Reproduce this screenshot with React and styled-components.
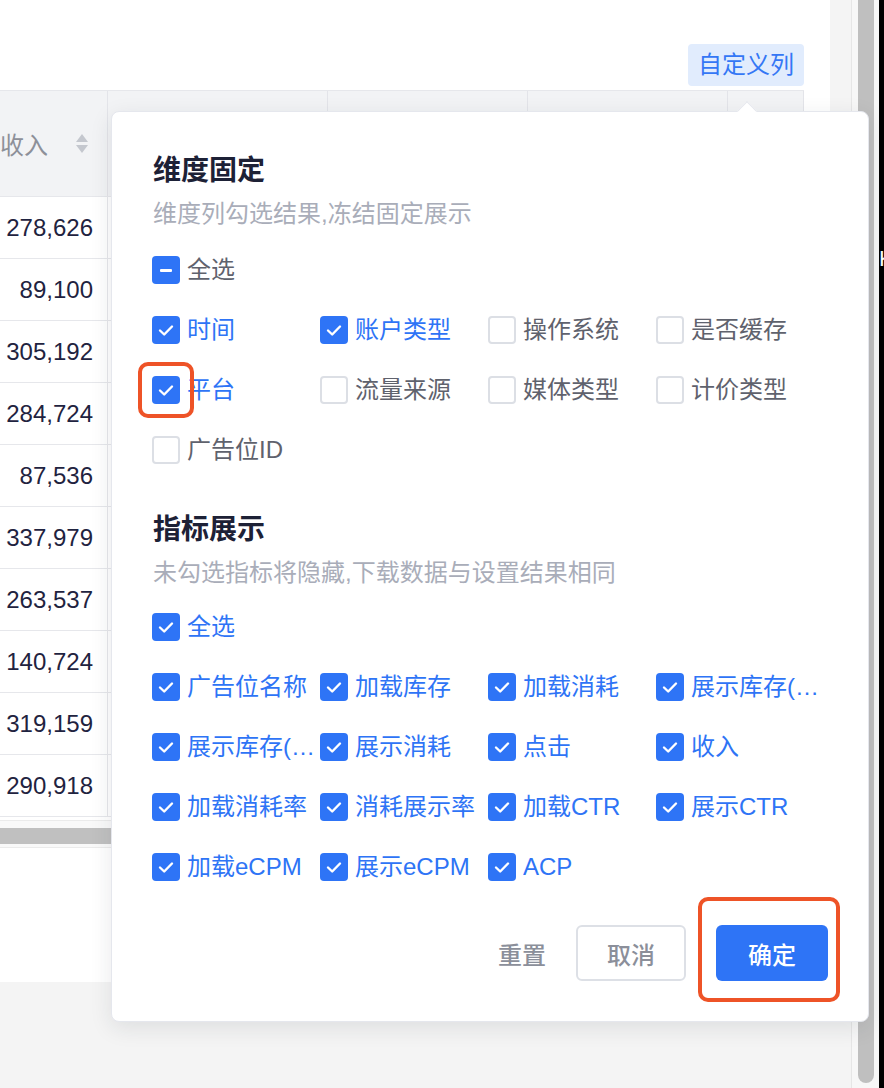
import React from 'react';
import styled, { createGlobalStyle } from 'styled-components';

const FONT = `"Liberation Sans", "Noto Sans CJK SC", sans-serif`;

const Global = createGlobalStyle`
  html, body { margin: 0; padding: 0; background: #f4f4f4; }
  body { font-family: ${FONT}; width: 884px; height: 1088px; overflow: hidden; }
  * { box-sizing: border-box; }
  button { font-family: ${FONT}; }
`;

const Screen = styled.div`
  display: flex;
  width: 884px;
  height: 1088px;
  overflow: hidden;
`;

const Workspace = styled.div`
  position: relative;
  width: 851px;
  flex: none;
  height: 100%;
  background: #f4f4f4;
`;

const Card = styled.div`
  width: 830px;
  height: 982px;
  background: #fff;
  display: flex;
  flex-direction: column;
`;

const Toolbar = styled.div`
  height: 90px;
  display: flex;
  justify-content: flex-end;
  align-items: flex-end;
  padding: 0 26px 4px 0;
`;

const CustomButton = styled.button`
  height: 42px;
  padding: 0 10px;
  border: none;
  border-radius: 4px;
  background: #e1ecfd;
  color: #3477f5;
  font-size: 24px;
  line-height: 42px;
`;

const Table = styled.div`
  width: 804px;
  border-top: 1px solid #e6e7eb;
`;

const COLS = '108px 220px 200px 200px 76px';

const HeaderRow = styled.div`
  display: grid;
  grid-template-columns: ${COLS};
  height: 106px;
  background: #f2f3f5;
  border-bottom: 1px solid #e6e7eb;
`;

const HeadCell = styled.div`
  display: flex;
  align-items: center;
  justify-content: flex-end;
  gap: 27px;
  padding-right: 18px;
  border-right: 1px solid #e3e4e9;
  color: #8d9099;
  font-size: 24px;
  white-space: nowrap;
  overflow: hidden;
`;

const SortIcon = styled.svg`
  width: 14px;
  height: 19px;
  flex: none;
`;

const BodyRow = styled.div`
  display: grid;
  grid-template-columns: ${COLS};
  height: 62px;
  border-bottom: 1px solid #e6e7eb;
`;

const Cell = styled.div`
  display: flex;
  align-items: center;
  justify-content: flex-end;
  padding-right: 14px;
  border-right: 1px solid #e6e7eb;
  color: #1f2340;
  font-size: 24px;
`;

const HScroll = styled.div`
  margin-top: 3px;
  padding: 7px 0 3px;
  border-top: 1px solid #ebebeb;
  border-bottom: 1px solid #ebebeb;
  background: #f9f9f9;
`;

const HThumb = styled.div`
  width: 700px;
  height: 16px;
  background: #c0c0c0;
`;

const ScrollTrack = styled.div`
  width: 28px;
  flex: none;
  height: 100%;
  padding: 0 5px 0 6px;
  border-left: 1px solid #e6e6e6;
  background: #f7f7f7;
`;

const VThumb = styled.div`
  margin-top: -10px;
  height: 1093px;
  border-radius: 8px;
  background: #bfbfbf;
`;

const OffScreen = styled.div`
  width: 5px;
  flex: none;
  height: 100%;
  background: #000;
  color: #fff;
  font-size: 22px;
  padding-top: 246px;
  overflow: hidden;
  white-space: nowrap;
`;

const Popover = styled.div`
  position: absolute;
  left: 111px;
  top: 111px;
  width: 758px;
  padding: 42px 40px 40px 40px;
  background: #fff;
  border: 1px solid #e5e7ed;
  border-radius: 8px;
  box-shadow: 0 6px 22px rgba(30, 35, 50, 0.1);
  z-index: 10;
`;

const Arrow = styled.div`
  position: absolute;
  top: -8px;
  left: 628px;
  width: 14px;
  height: 14px;
  background: #fff;
  border-left: 1px solid #e5e7ed;
  border-top: 1px solid #e5e7ed;
  transform: rotate(45deg);
`;

const SectionTitle = styled.div`
  margin-top: ${(p) => (p.$first ? 0 : 33)}px;
  font-size: 28px;
  line-height: 34px;
  font-weight: 700;
  color: #1d2136;
  padding-left: 1px;
`;

const SectionHint = styled.div`
  margin-top: 8px;
  font-size: 24px;
  line-height: 36px;
  color: #a9adb9;
  padding-left: 1px;
`;

const OptionGrid = styled.div`
  margin-top: ${(p) => p.$gap}px;
  display: grid;
  grid-template-columns: repeat(4, 168px);
  grid-auto-rows: 60px;
`;

const Option = styled.label`
  display: flex;
  align-items: center;
  gap: 7px;
  min-width: 0;
  grid-column: ${(p) => (p.$wide ? '1 / -1' : 'auto')};
`;

const BoxWrap = styled.span`
  position: relative;
  display: inline-flex;
  flex: none;
`;

const Box = styled.span`
  width: 28px;
  height: 28px;
  border-radius: 4px;
  display: inline-flex;
  align-items: center;
  justify-content: center;
  background: ${(p) => (p.$state === 'off' ? '#fff' : '#2e74f6')};
  border: ${(p) => (p.$state === 'off' ? '2px solid #dcdfe5' : 'none')};
`;

const Dash = styled.span`
  width: 12px;
  height: 3px;
  border-radius: 1px;
  background: #fff;
`;

const Label = styled.span`
  flex: 1;
  min-width: 0;
  padding-right: 4px;
  font-size: 24px;
  line-height: 30px;
  white-space: nowrap;
  overflow: hidden;
  text-overflow: ellipsis;
  color: ${(p) => (p.$state === 'on' ? '#2e74f6' : '#5f626d')};
`;

const Mark = styled.span`
  position: absolute;
  top: ${(p) => p.$t}px;
  right: ${(p) => p.$r}px;
  bottom: ${(p) => p.$b}px;
  left: ${(p) => p.$l}px;
  border: 4px solid #ee5327;
  border-radius: 10px;
  pointer-events: none;
  z-index: 3;
`;

const Footer = styled.div`
  margin-top: 28px;
  display: flex;
  justify-content: flex-end;
  align-items: center;
  gap: 30px;
`;

const TextButton = styled.button`
  padding: 0;
  border: none;
  background: transparent;
  color: #8b8f9a;
  font-size: 24px;
  font-weight: 500;
`;

const GhostButton = styled.button`
  width: 110px;
  height: 56px;
  border: 2px solid #dde0e6;
  border-radius: 6px;
  background: #fff;
  color: #8b8f9a;
  font-size: 24px;
  font-weight: 500;
`;

const PrimaryWrap = styled.span`
  position: relative;
  display: inline-flex;
`;

const PrimaryButton = styled.button`
  width: 112px;
  height: 56px;
  border: none;
  border-radius: 6px;
  background: #2e74f6;
  color: #fff;
  font-size: 24px;
  font-weight: 500;
`;

const Check = () => (
  <svg width="28" height="28" viewBox="0 0 28 28">
    <polyline points="8,14.5 12.2,18.5 20,10.5" fill="none" stroke="#fff" strokeWidth="2.4" strokeLinecap="round" strokeLinejoin="round" />
  </svg>
);

function CheckOption({ state, label, wide, marked }) {
  return (
    <Option $wide={wide}>
      <BoxWrap>
        <Box $state={state}>
          {state === 'on' && <Check />}
          {state === 'half' && <Dash />}
        </Box>
        {marked && <Mark $t={-14} $r={-14} $b={-14} $l={-14} />}
      </BoxWrap>
      <Label $state={state}>{label}</Label>
    </Option>
  );
}

const dims = [
  ['on', '时间'], ['on', '账户类型'], ['off', '操作系统'], ['off', '是否缓存'],
  ['on', '平台', true], ['off', '流量来源'], ['off', '媒体类型'], ['off', '计价类型'],
  ['off', '广告位ID'],
];

const metrics = [
  '广告位名称', '加载库存', '加载消耗', '展示库存(不去重)',
  '展示库存(去重)', '展示消耗', '点击', '收入',
  '加载消耗率', '消耗展示率', '加载CTR', '展示CTR',
  '加载eCPM', '展示eCPM', 'ACP',
];

const values = ['278,626', '89,100', '305,192', '284,724', '87,536', '337,979', '263,537', '140,724', '319,159', '290,918'];

export default function App() {
  return (
    <>
      <Global />
      <Screen>
        <Workspace>
          <Card>
            <Toolbar>
              <CustomButton>自定义列</CustomButton>
            </Toolbar>
            <Table>
              <HeaderRow>
                <HeadCell>
                  <span>收入</span>
                  <SortIcon viewBox="0 0 14 19">
                    <polygon points="7,0 13,8 1,8" fill="#c4c7ce" />
                    <polygon points="1,11 13,11 7,19" fill="#c4c7ce" />
                  </SortIcon>
                </HeadCell>
                <HeadCell />
                <HeadCell />
                <HeadCell />
                <HeadCell />
              </HeaderRow>
              {values.map((v) => (
                <BodyRow key={v}>
                  <Cell>{v}</Cell>
                  <Cell />
                  <Cell />
                  <Cell />
                  <Cell />
                </BodyRow>
              ))}
              <HScroll>
                <HThumb />
              </HScroll>
            </Table>
          </Card>

          <Popover>
            <Arrow />
            <SectionTitle $first>维度固定</SectionTitle>
            <SectionHint>维度列勾选结果,冻结固定展示</SectionHint>
            <OptionGrid $gap={8}>
              <CheckOption wide state="half" label="全选" />
              {dims.map(([s, l, m]) => (
                <CheckOption key={l} state={s} label={l} marked={m} />
              ))}
            </OptionGrid>

            <SectionTitle>指标展示</SectionTitle>
            <SectionHint>未勾选指标将隐藏,下载数据与设置结果相同</SectionHint>
            <OptionGrid $gap={6}>
              <CheckOption wide state="on" label="全选" />
              {metrics.map((l) => (
                <CheckOption key={l} state="on" label={l} />
              ))}
            </OptionGrid>

            <Footer>
              <TextButton>重置</TextButton>
              <GhostButton>取消</GhostButton>
              <PrimaryWrap>
                <PrimaryButton>确定</PrimaryButton>
                <Mark $t={-28} $r={-12} $b={-21} $l={-18} />
              </PrimaryWrap>
            </Footer>
          </Popover>
        </Workspace>
        <ScrollTrack>
          <VThumb />
        </ScrollTrack>
        <OffScreen>K</OffScreen>
      </Screen>
    </>
  );
}
